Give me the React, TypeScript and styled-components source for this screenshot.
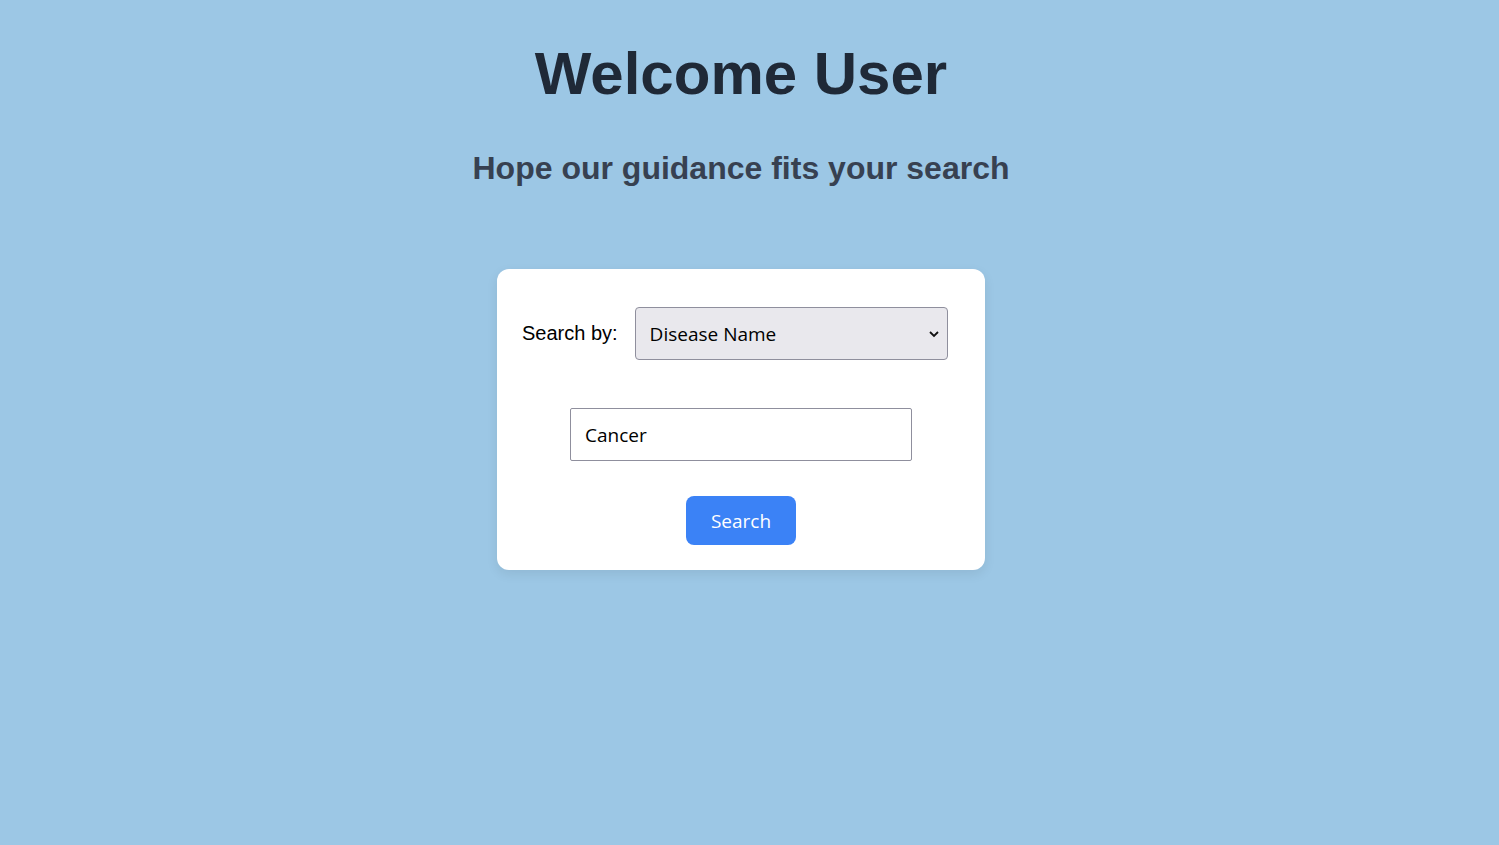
import React, { useState } from "react";
import styled, { createGlobalStyle } from "styled-components";

const GlobalStyle = createGlobalStyle`
  html, body { margin: 0; padding: 0; }
  body { background: #9cc7e5; font-family: "Liberation Sans", Arial, sans-serif; }
`;

const Page = styled.main`
  min-height: 845px;
  box-sizing: border-box;
  padding: 39px 17px 0 0;
  display: flex;
  flex-direction: column;
  align-items: center;
  background: #9cc7e5;
`;

const Title = styled.h1`
  margin: 0;
  font-family: "Liberation Sans", Arial, sans-serif;
  font-size: 60px;
  font-weight: 700;
  line-height: normal;
  color: #1f2937;
`;

const Subtitle = styled.h2`
  margin: 42px 0 0;
  font-family: "Liberation Sans", Arial, sans-serif;
  font-size: 32px;
  font-weight: 700;
  line-height: normal;
  color: #374151;
`;

const Card = styled.form`
  margin-top: 82px;
  width: 488px;
  box-sizing: border-box;
  padding: 38px 25px 25px;
  background: #ffffff;
  border-radius: 12px;
  box-shadow: 0 4px 12px rgba(0, 0, 0, 0.08);
  display: flex;
  flex-direction: column;
  align-items: center;
`;

const Row = styled.div`
  align-self: stretch;
  display: flex;
  align-items: center;
  gap: 17px;
`;

const Label = styled.label`
  font-family: "Liberation Sans", Arial, sans-serif;
  font-size: 20px;
  color: #000;
`;

const SelectWrap = styled.div`
  position: relative;
  width: 313px;
  height: 53px;
`;

const Select = styled.select`
  appearance: none;
  width: 100%;
  height: 100%;
  box-sizing: border-box;
  padding: 0 36px 0 14px;
  background: #e9e8ed;
  border: 1px solid #8f8f9d;
  border-radius: 4px;
  font-family: "Open Sans", "Noto Sans", sans-serif;
  font-size: 19px;
  color: #000;
  outline: none;
`;

const Chevron = styled.svg`
  position: absolute;
  right: 8px;
  top: 50%;
  transform: translateY(-50%);
  pointer-events: none;
`;

const Input = styled.input`
  margin-top: 48px;
  width: 342px;
  height: 53px;
  box-sizing: border-box;
  padding: 0 14px;
  border: 1px solid #8f8f9d;
  border-radius: 2px;
  font-family: "Open Sans", "Noto Sans", sans-serif;
  font-size: 19px;
  color: #000;
  outline: none;
`;

const Button = styled.button`
  margin-top: 35px;
  width: 110px;
  height: 49px;
  border: none;
  border-radius: 8px;
  background: #3b82f6;
  color: #ffffff;
  font-family: "Open Sans", "Noto Sans", sans-serif;
  font-size: 19px;
  cursor: pointer;
`;

export default function App() {
  const [by, setBy] = useState("disease");
  const [q, setQ] = useState("Cancer");
  return (
    <>
      <GlobalStyle />
      <Page>
        <Title>Welcome User</Title>
        <Subtitle>Hope our guidance fits your search</Subtitle>
        <Card onSubmit={(e) => e.preventDefault()}>
          <Row>
            <Label htmlFor="by">Search by:</Label>
            <SelectWrap>
              <Select id="by" value={by} onChange={(e) => setBy(e.target.value)}>
                <option value="disease">Disease Name</option>
                <option value="symptom">Symptom</option>
              </Select>
              <Chevron width="12" height="8" viewBox="0 0 12 8">
                <path d="M2 2 L6 6 L10 2" fill="none" stroke="#111" strokeWidth="1.8" />
              </Chevron>
            </SelectWrap>
          </Row>
          <Input value={q} onChange={(e) => setQ(e.target.value)} />
          <Button type="submit">Search</Button>
        </Card>
      </Page>
    </>
  );
}
